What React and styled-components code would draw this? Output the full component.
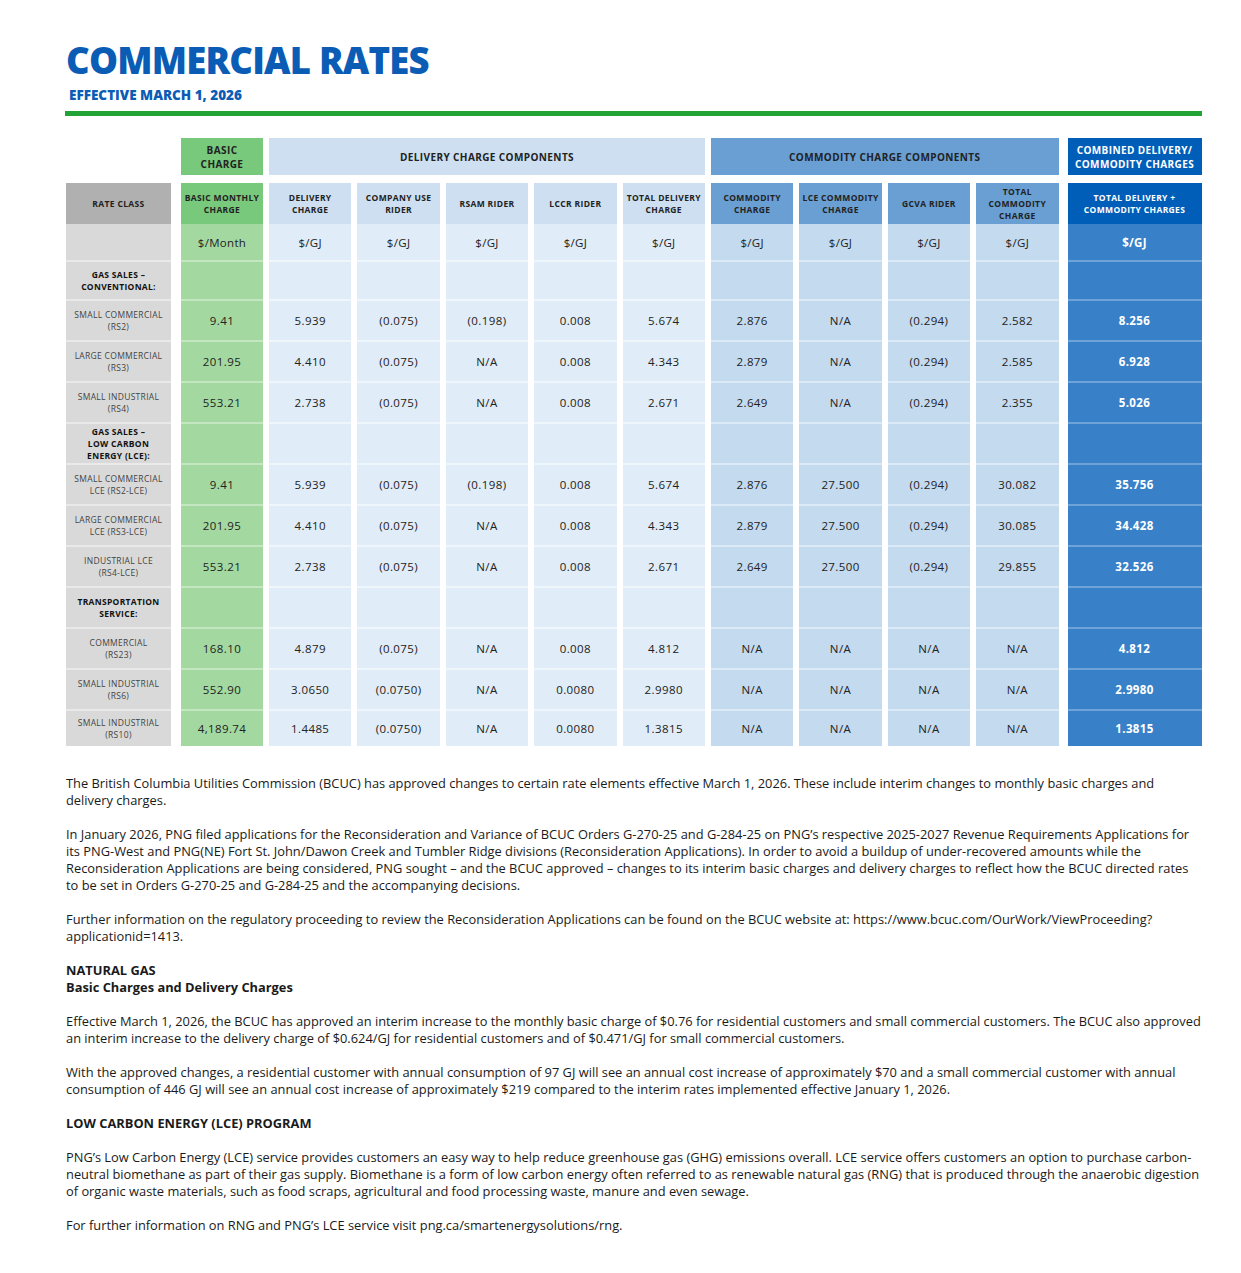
import React from 'react';
import styled, { createGlobalStyle } from 'styled-components';

const GlobalStyle = createGlobalStyle`
  body {
    margin: 0;
    background: #ffffff;
    font-family: 'Open Sans', 'Liberation Sans', sans-serif;
    color: #1c1c1c;
  }
`;

const palette = {
  rate: { head: '#b0b0b0', body: '#d9d9d9', line: '#e9e9e9', text: '#222' },
  basic: { head: '#78c97c', body: '#a3d9a1', line: '#c3e7c1', text: '#222' },
  delivery: { head: '#cddff0', body: '#e0ecf7', line: '#eef5fb', text: '#222' },
  commodity: { head: '#699fd3', body: '#c4daee', line: '#dce9f6', text: '#222' },
  combined: { head: '#005eb8', body: '#3881c8', line: '#6ea3d8', text: '#fff' },
};

const columns = [
  { tone: 'basic', title: ['BASIC MONTHLY', 'CHARGE'], unit: '$/Month' },
  { tone: 'delivery', title: ['DELIVERY', 'CHARGE'], unit: '$/GJ' },
  { tone: 'delivery', title: ['COMPANY USE', 'RIDER'], unit: '$/GJ' },
  { tone: 'delivery', title: ['RSAM RIDER'], unit: '$/GJ' },
  { tone: 'delivery', title: ['LCCR RIDER'], unit: '$/GJ' },
  { tone: 'delivery', title: ['TOTAL DELIVERY', 'CHARGE'], unit: '$/GJ' },
  { tone: 'commodity', title: ['COMMODITY', 'CHARGE'], unit: '$/GJ' },
  { tone: 'commodity', title: ['LCE COMMODITY', 'CHARGE'], unit: '$/GJ' },
  { tone: 'commodity', title: ['GCVA RIDER'], unit: '$/GJ' },
  { tone: 'commodity', title: ['TOTAL', 'COMMODITY', 'CHARGE'], unit: '$/GJ' },
  { tone: 'combined', title: ['TOTAL DELIVERY +', 'COMMODITY CHARGES'], unit: '$/GJ' },
];

const rows = [
  { section: ['GAS SALES –', 'CONVENTIONAL:'] },
  { label: ['SMALL COMMERCIAL', '(RS2)'], values: ['9.41', '5.939', '(0.075)', '(0.198)', '0.008', '5.674', '2.876', 'N/A', '(0.294)', '2.582', '8.256'] },
  { label: ['LARGE COMMERCIAL', '(RS3)'], values: ['201.95', '4.410', '(0.075)', 'N/A', '0.008', '4.343', '2.879', 'N/A', '(0.294)', '2.585', '6.928'] },
  { label: ['SMALL INDUSTRIAL', '(RS4)'], values: ['553.21', '2.738', '(0.075)', 'N/A', '0.008', '2.671', '2.649', 'N/A', '(0.294)', '2.355', '5.026'] },
  { section: ['GAS SALES –', 'LOW CARBON', 'ENERGY (LCE):'] },
  { label: ['SMALL COMMERCIAL', 'LCE (RS2-LCE)'], values: ['9.41', '5.939', '(0.075)', '(0.198)', '0.008', '5.674', '2.876', '27.500', '(0.294)', '30.082', '35.756'] },
  { label: ['LARGE COMMERCIAL', 'LCE (RS3-LCE)'], values: ['201.95', '4.410', '(0.075)', 'N/A', '0.008', '4.343', '2.879', '27.500', '(0.294)', '30.085', '34.428'] },
  { label: ['INDUSTRIAL LCE', '(RS4-LCE)'], values: ['553.21', '2.738', '(0.075)', 'N/A', '0.008', '2.671', '2.649', '27.500', '(0.294)', '29.855', '32.526'] },
  { section: ['TRANSPORTATION', 'SERVICE:'] },
  { label: ['COMMERCIAL', '(RS23)'], values: ['168.10', '4.879', '(0.075)', 'N/A', '0.008', '4.812', 'N/A', 'N/A', 'N/A', 'N/A', '4.812'] },
  { label: ['SMALL INDUSTRIAL', '(RS6)'], values: ['552.90', '3.0650', '(0.0750)', 'N/A', '0.0080', '2.9980', 'N/A', 'N/A', 'N/A', 'N/A', '2.9980'] },
  { label: ['SMALL INDUSTRIAL', '(RS10)'], values: ['4,189.74', '1.4485', '(0.0750)', 'N/A', '0.0080', '1.3815', 'N/A', 'N/A', 'N/A', 'N/A', '1.3815'] },
];

const lines = parts =>
  parts.map((p, i) => (
    <React.Fragment key={i}>
      {i > 0 && <br />}
      {p}
    </React.Fragment>
  ));

function App() {
  return (
    <Page>
      <GlobalStyle />
      <Title>COMMERCIAL RATES</Title>
      <Subtitle>EFFECTIVE MARCH 1, 2026</Subtitle>
      <Rule />

      <Table>
        <div />
        <GroupCell $tone="basic">{lines(['BASIC', 'CHARGE'])}</GroupCell>
        <GroupCell $tone="delivery" $span={5}>DELIVERY CHARGE COMPONENTS</GroupCell>
        <GroupCell $tone="commodity" $span={4}>COMMODITY CHARGE COMPONENTS</GroupCell>
        <GroupCell $tone="combined">{lines(['COMBINED DELIVERY/', 'COMMODITY CHARGES'])}</GroupCell>

        <HeadCell $tone="rate">RATE CLASS</HeadCell>
        {columns.map((c, i) => (
          <HeadCell key={i} $tone={c.tone}>{lines(c.title)}</HeadCell>
        ))}

        <UnitCell $tone="rate" />
        {columns.map((c, i) => (
          <UnitCell key={i} $tone={c.tone}>{c.unit}</UnitCell>
        ))}

        {rows.map((r, ri) =>
          r.section ? (
            <React.Fragment key={ri}>
              <LabelCell $tone="rate" $bold>{lines(r.section)}</LabelCell>
              {columns.map((c, i) => (
                <ValueCell key={i} $tone={c.tone} />
              ))}
            </React.Fragment>
          ) : (
            <React.Fragment key={ri}>
              <LabelCell $tone="rate">{lines(r.label)}</LabelCell>
              {r.values.map((v, i) => (
                <ValueCell key={i} $tone={columns[i].tone}>{v}</ValueCell>
              ))}
            </React.Fragment>
          )
        )}
      </Table>

      <Notes>
        <p>
          The British Columbia Utilities Commission (BCUC) has approved changes to certain rate elements effective
          March 1, 2026. These include interim changes to monthly basic charges and delivery charges.
        </p>
        <p>
          In January 2026, PNG filed applications for the Reconsideration and Variance of BCUC Orders G-270-25 and
          G-284-25 on PNG’s respective 2025-2027 Revenue Requirements Applications for its PNG-West and PNG(NE) Fort
          St. John/Dawon Creek and Tumbler Ridge divisions (Reconsideration Applications). In order to avoid a buildup
          of under-recovered amounts while the Reconsideration Applications are being considered, PNG sought – and the
          BCUC approved – changes to its interim basic charges and delivery charges to reflect how the BCUC directed
          rates to be set in Orders G-270-25 and G-284-25 and the accompanying decisions.
        </p>
        <p>
          Further information on the regulatory proceeding to review the Reconsideration Applications can be found on
          the BCUC website at: https://www.bcuc.com/OurWork/ViewProceeding?<wbr />applicationid=1413.
        </p>
        <p>
          <strong>NATURAL GAS</strong>
          <br />
          <strong>Basic Charges and Delivery Charges</strong>
        </p>
        <p>
          Effective March 1, 2026, the BCUC has approved an interim increase to the monthly basic charge of $0.76 for
          residential customers and small commercial customers. The BCUC also approved an interim increase to the
          delivery charge of $0.624/GJ for residential customers and of $0.471/GJ for small commercial customers.
        </p>
        <p>
          With the approved changes, a residential customer with annual consumption of 97 GJ will see an annual cost
          increase of approximately $70 and a small commercial customer with annual consumption of 446 GJ will see an
          annual cost increase of approximately $219 compared to the interim rates implemented effective January 1,
          2026.
        </p>
        <p>
          <strong>LOW CARBON ENERGY (LCE) PROGRAM</strong>
        </p>
        <p>
          PNG’s Low Carbon Energy (LCE) service provides customers an easy way to help reduce greenhouse gas (GHG)
          emissions overall. LCE service offers customers an option to purchase carbon-neutral biomethane as part of
          their gas supply. Biomethane is a form of low carbon energy often referred to as renewable natural gas (RNG)
          that is produced through the anaerobic digestion of organic waste materials, such as food scraps,
          agricultural and food processing waste, manure and even sewage.
        </p>
        <p>For further information on RNG and PNG’s LCE service visit png.ca/smartenergysolutions/rng.</p>
      </Notes>
    </Page>
  );
}

const Page = styled.div`
  width: 1136px;
  padding: 36px 39px 40px 66px;
`;

const Title = styled.h1`
  margin: 0;
  font-size: 36.5px;
  line-height: 48px;
  font-weight: 800;
  color: #0a5cb5;
  letter-spacing: -0.8px;
`;

const Subtitle = styled.div`
  margin-top: 3px;
  padding-left: 3px;
  font-size: 13.5px;
  line-height: 16px;
  font-weight: 800;
  color: #0a5cb5;
`;

const Rule = styled.div`
  height: 5px;
  margin: 8px 0 22px -1px;
  background: #22a335;
`;

const Table = styled.div`
  display: grid;
  grid-template-columns: 109px 82px repeat(9, 82.4px) 137px;
  grid-template-rows: 45px 41px 36px 39px repeat(10, 41px) 37px;
  column-gap: 6px;
`;

const Cell = styled.div`
  display: flex;
  align-items: center;
  justify-content: center;
  text-align: center;
  background: ${({ $tone }) => palette[$tone].body};
  color: ${({ $tone }) => palette[$tone].text};
  margin-right: ${({ $tone }) => ($tone === 'rate' ? '4px' : '0')};
  margin-left: ${({ $tone }) => ($tone === 'combined' ? '3px' : '0')};
`;

const GroupCell = styled(Cell)`
  grid-column: span ${({ $span }) => $span || 1};
  align-self: start;
  height: 37px;
  background: ${({ $tone }) => palette[$tone].head};
  font-size: 10px;
  line-height: 14px;
  font-weight: 700;
  letter-spacing: 0.4px;
`;

const HeadCell = styled(Cell)`
  background: ${({ $tone }) => palette[$tone].head};
  font-size: 8.5px;
  line-height: 12px;
  font-weight: 700;
  letter-spacing: 0.35px;
  padding: 0 2px;
`;

const UnitCell = styled(Cell)`
  font-size: 11.5px;
  letter-spacing: 0.3px;
  font-weight: ${({ $tone }) => ($tone === 'combined' ? 700 : 400)};
`;

const LabelCell = styled(Cell)`
  border-top: 2px solid ${palette.rate.line};
  font-size: 8.5px;
  line-height: 12px;
  letter-spacing: 0.3px;
  font-weight: ${({ $bold }) => ($bold ? 700 : 400)};
  color: ${({ $bold }) => ($bold ? '#111' : '#444')};
`;

const ValueCell = styled(Cell)`
  border-top: 2px solid ${({ $tone }) => palette[$tone].line};
  font-size: 11.5px;
  letter-spacing: 0.4px;
  font-weight: ${({ $tone }) => ($tone === 'combined' ? 700 : 400)};
`;

const Notes = styled.div`
  margin-top: 29px;
  font-size: 12.85px;
  line-height: 17px;
  color: #1a1a1a;

  p {
    margin: 0 0 17px;
  }

  strong {
    font-weight: 700;
  }
`;

export default App;
